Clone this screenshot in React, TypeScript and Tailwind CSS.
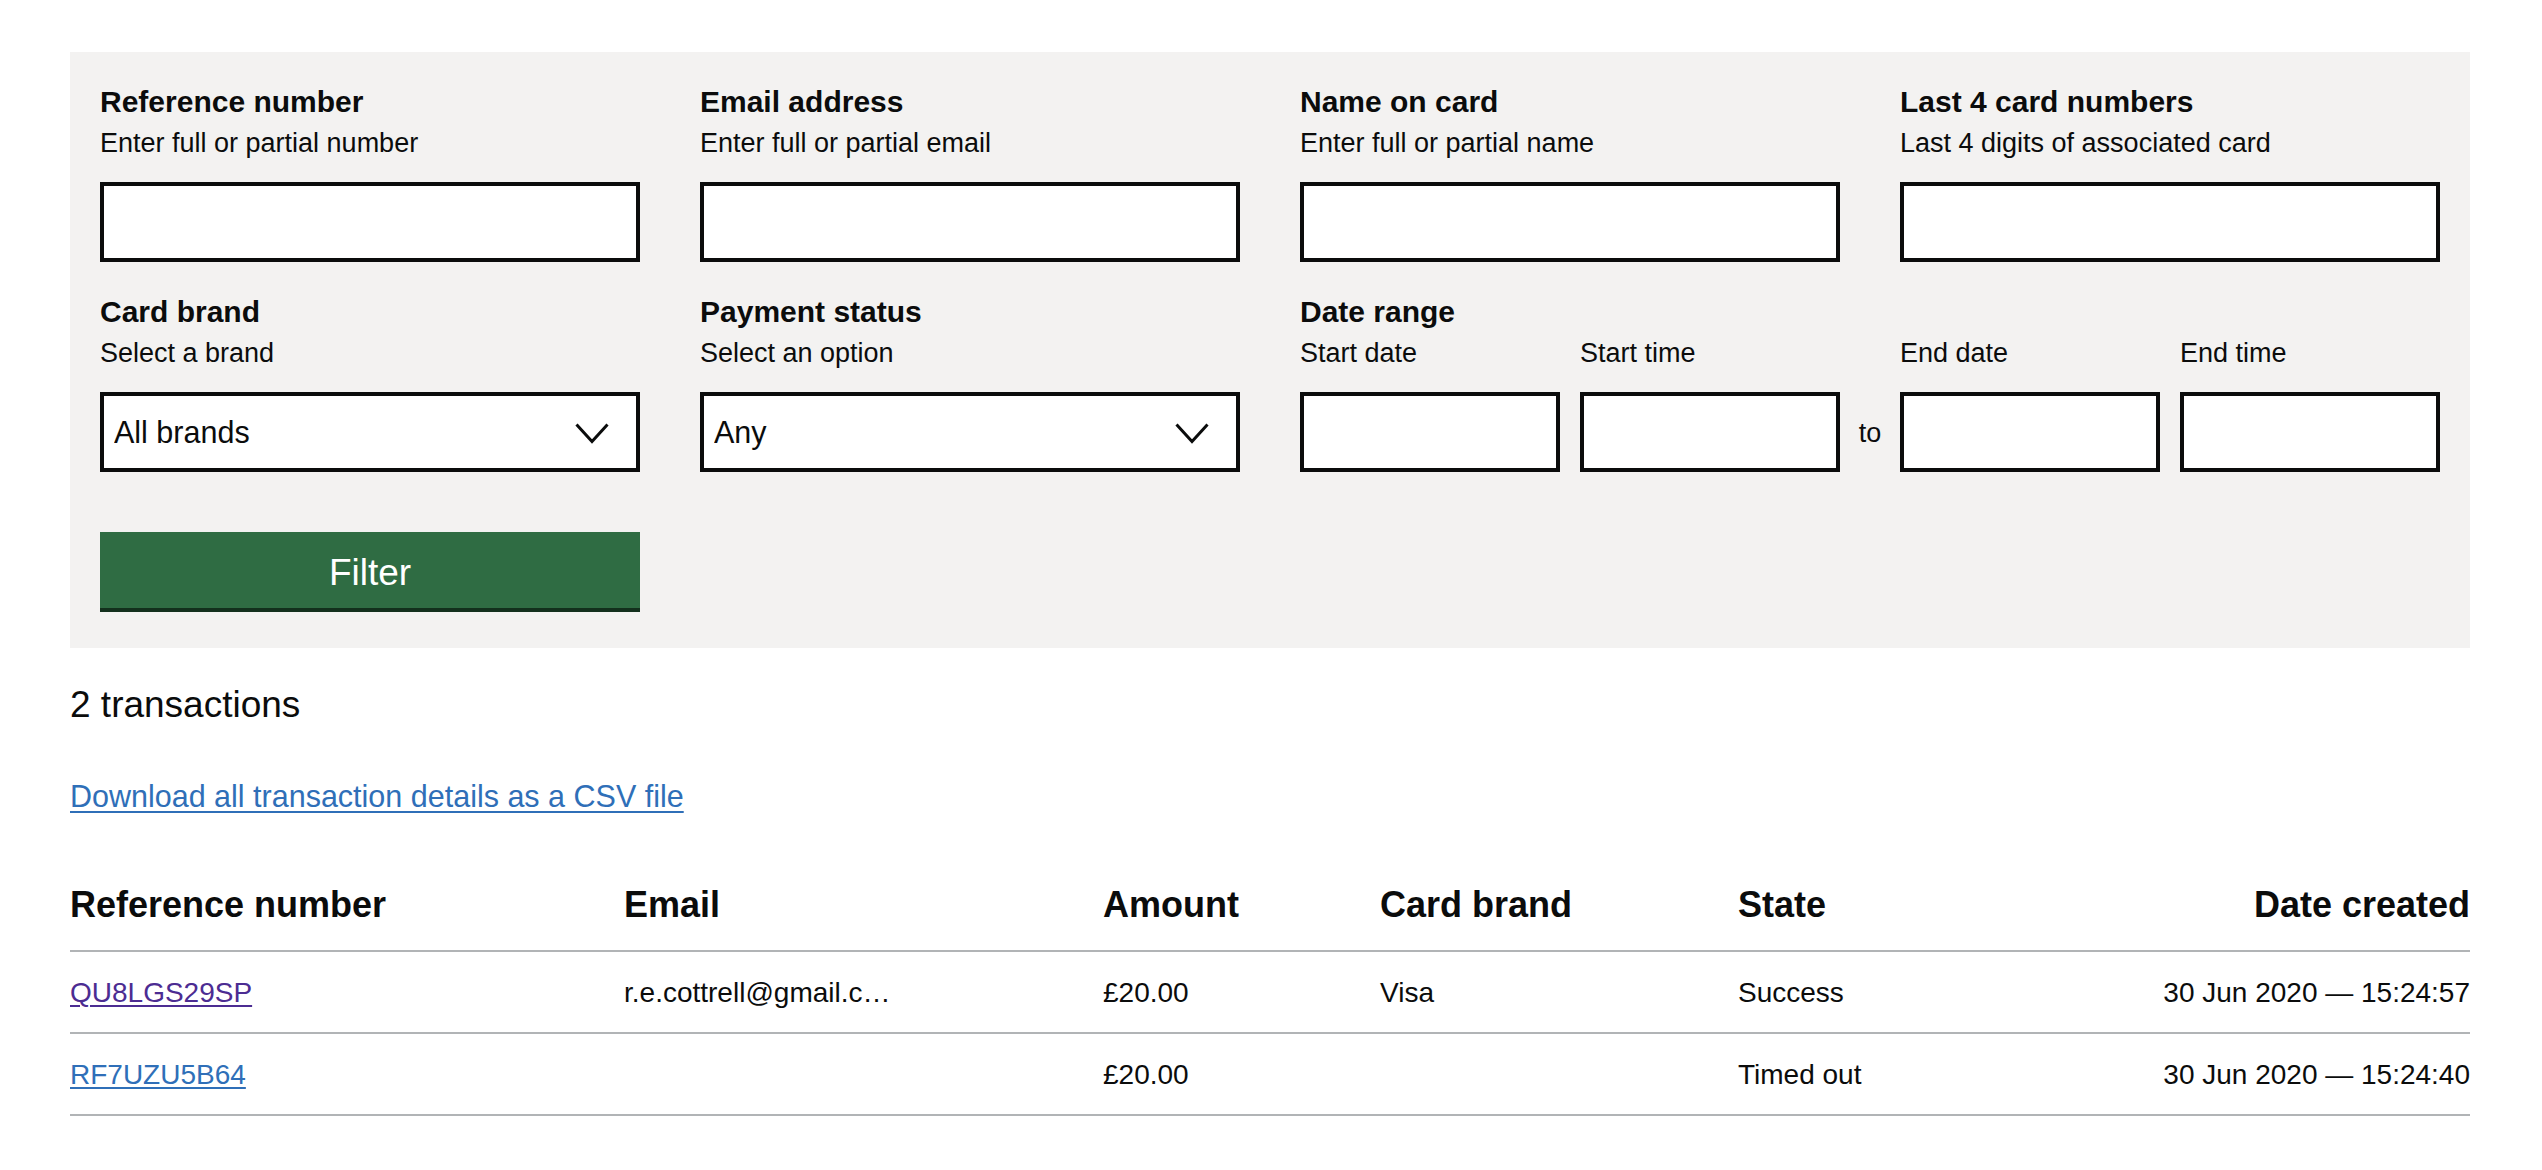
import React from "react";

function Label({ children }: { children: React.ReactNode }) {
  return <div className="text-[30px] font-bold leading-[40px] text-[#0b0c0c]">{children}</div>;
}

function Hint({ children }: { children: React.ReactNode }) {
  return <div className="mt-[3px] text-[27px] leading-[36px] text-[#0b0c0c]">{children}</div>;
}

function TextInput() {
  return (
    <input
      type="text"
      className="mt-[21px] block h-[80px] w-full rounded-none border-4 border-[#0b0c0c] bg-white px-[10px] text-[30px] text-[#0b0c0c] outline-none"
    />
  );
}

function Field({ label, hint }: { label: string; hint: string }) {
  return (
    <div className="flex flex-col">
      <Label>{label}</Label>
      <Hint>{hint}</Hint>
      <TextInput />
    </div>
  );
}

function SelectField({ label, hint, value }: { label: string; hint: string; value: string }) {
  return (
    <div className="flex flex-col">
      <Label>{label}</Label>
      <Hint>{hint}</Hint>
      <div className="relative mt-[21px] h-[80px] w-full">
        <select className="block h-full w-full appearance-none rounded-none border-4 border-[#0b0c0c] bg-white pl-[10px] pt-[2px] text-[30.5px] text-[#0b0c0c] outline-none">
          <option>{value}</option>
        </select>
        <svg
          className="pointer-events-none absolute right-[31px] top-[31px]"
          width="34"
          height="21"
          viewBox="0 0 34 21"
        >
          <polyline points="1.5,1.5 17,18.5 32.5,1.5" fill="none" stroke="#0b0c0c" strokeWidth="3" />
        </svg>
      </div>
    </div>
  );
}

function SubField({ label }: { label: string }) {
  return (
    <div className="flex w-[260px] flex-col">
      <Hint>{label}</Hint>
      <TextInput />
    </div>
  );
}

const rows = [
  {
    ref: "QU8LGS29SP",
    visited: true,
    email: "r.e.cottrell@gmail.c…",
    amount: "£20.00",
    brand: "Visa",
    state: "Success",
    date: "30 Jun 2020 — 15:24:57",
  },
  {
    ref: "RF7UZU5B64",
    visited: false,
    email: "",
    amount: "£20.00",
    brand: "",
    state: "Timed out",
    date: "30 Jun 2020 — 15:24:40",
  },
];

export default function App() {
  return (
    <div className="min-h-[1170px] bg-white font-[Liberation_Sans,Arial,sans-serif] text-[#0b0c0c]">
      <div className="ml-[70px] w-[2400px] pt-[52px]">
        <div className="bg-[#f3f2f1] px-[30px] pb-[40px] pt-[30px]">
          <div className="grid grid-cols-4 gap-x-[60px] gap-y-[30px]">
            <Field label="Reference number" hint="Enter full or partial number" />
            <Field label="Email address" hint="Enter full or partial email" />
            <Field label="Name on card" hint="Enter full or partial name" />
            <Field label="Last 4 card numbers" hint="Last 4 digits of associated card" />
            <SelectField label="Card brand" hint="Select a brand" value="All brands" />
            <SelectField label="Payment status" hint="Select an option" value="Any" />
            <div className="col-span-2 flex flex-col">
              <Label>Date range</Label>
              <div className="flex">
                <SubField label="Start date" />
                <div className="ml-[20px]">
                  <SubField label="Start time" />
                </div>
                <div className="flex h-[80px] w-[60px] items-center justify-center self-end pt-[2px] text-[27px] leading-[36px]">
                  to
                </div>
                <SubField label="End date" />
                <div className="ml-[20px]">
                  <SubField label="End time" />
                </div>
              </div>
            </div>
          </div>
          <button
            type="button"
            className="mt-[60px] block h-[76px] w-[540px] bg-[#2f6c43] pt-[5px] text-[37px] leading-[40px] text-white shadow-[0_4px_0_#13301d]"
          >
            Filter
          </button>
        </div>

        <p className="mt-[32px] text-[37px] leading-[50px]">2 transactions</p>

        <a
          href="#"
          className="mt-[46px] block w-fit text-[30.5px] leading-[40px] text-[#2f6fb8] underline decoration-2 underline-offset-[4px]"
        >
          Download all transaction details as a CSV file
        </a>

        <div className="mt-[44px]">
          <div className="grid grid-cols-[554px_479px_277px_358px_1fr_auto] border-b-2 border-[#b1b4b6] pb-[20px] pt-[20px] text-[36px] font-bold leading-[50px]">
            <div>Reference number</div>
            <div>Email</div>
            <div>Amount</div>
            <div>Card brand</div>
            <div>State</div>
            <div className="text-right">Date created</div>
          </div>
          {rows.map((r) => (
            <div
              key={r.ref}
              className="grid grid-cols-[554px_479px_277px_358px_1fr_auto] border-b-2 border-[#b1b4b6] pb-[19px] pt-[21px] text-[28px] leading-[40px]"
            >
              <div>
                <a
                  href="#"
                  className={
                    r.visited
                      ? "text-[#4c2c92] underline decoration-2 underline-offset-[3px]"
                      : "text-[#2f6fb8] underline decoration-2 underline-offset-[3px]"
                  }
                >
                  {r.ref}
                </a>
              </div>
              <div>{r.email}</div>
              <div>{r.amount}</div>
              <div>{r.brand}</div>
              <div>{r.state}</div>
              <div className="text-right">{r.date}</div>
            </div>
          ))}
        </div>
      </div>
    </div>
  );
}
